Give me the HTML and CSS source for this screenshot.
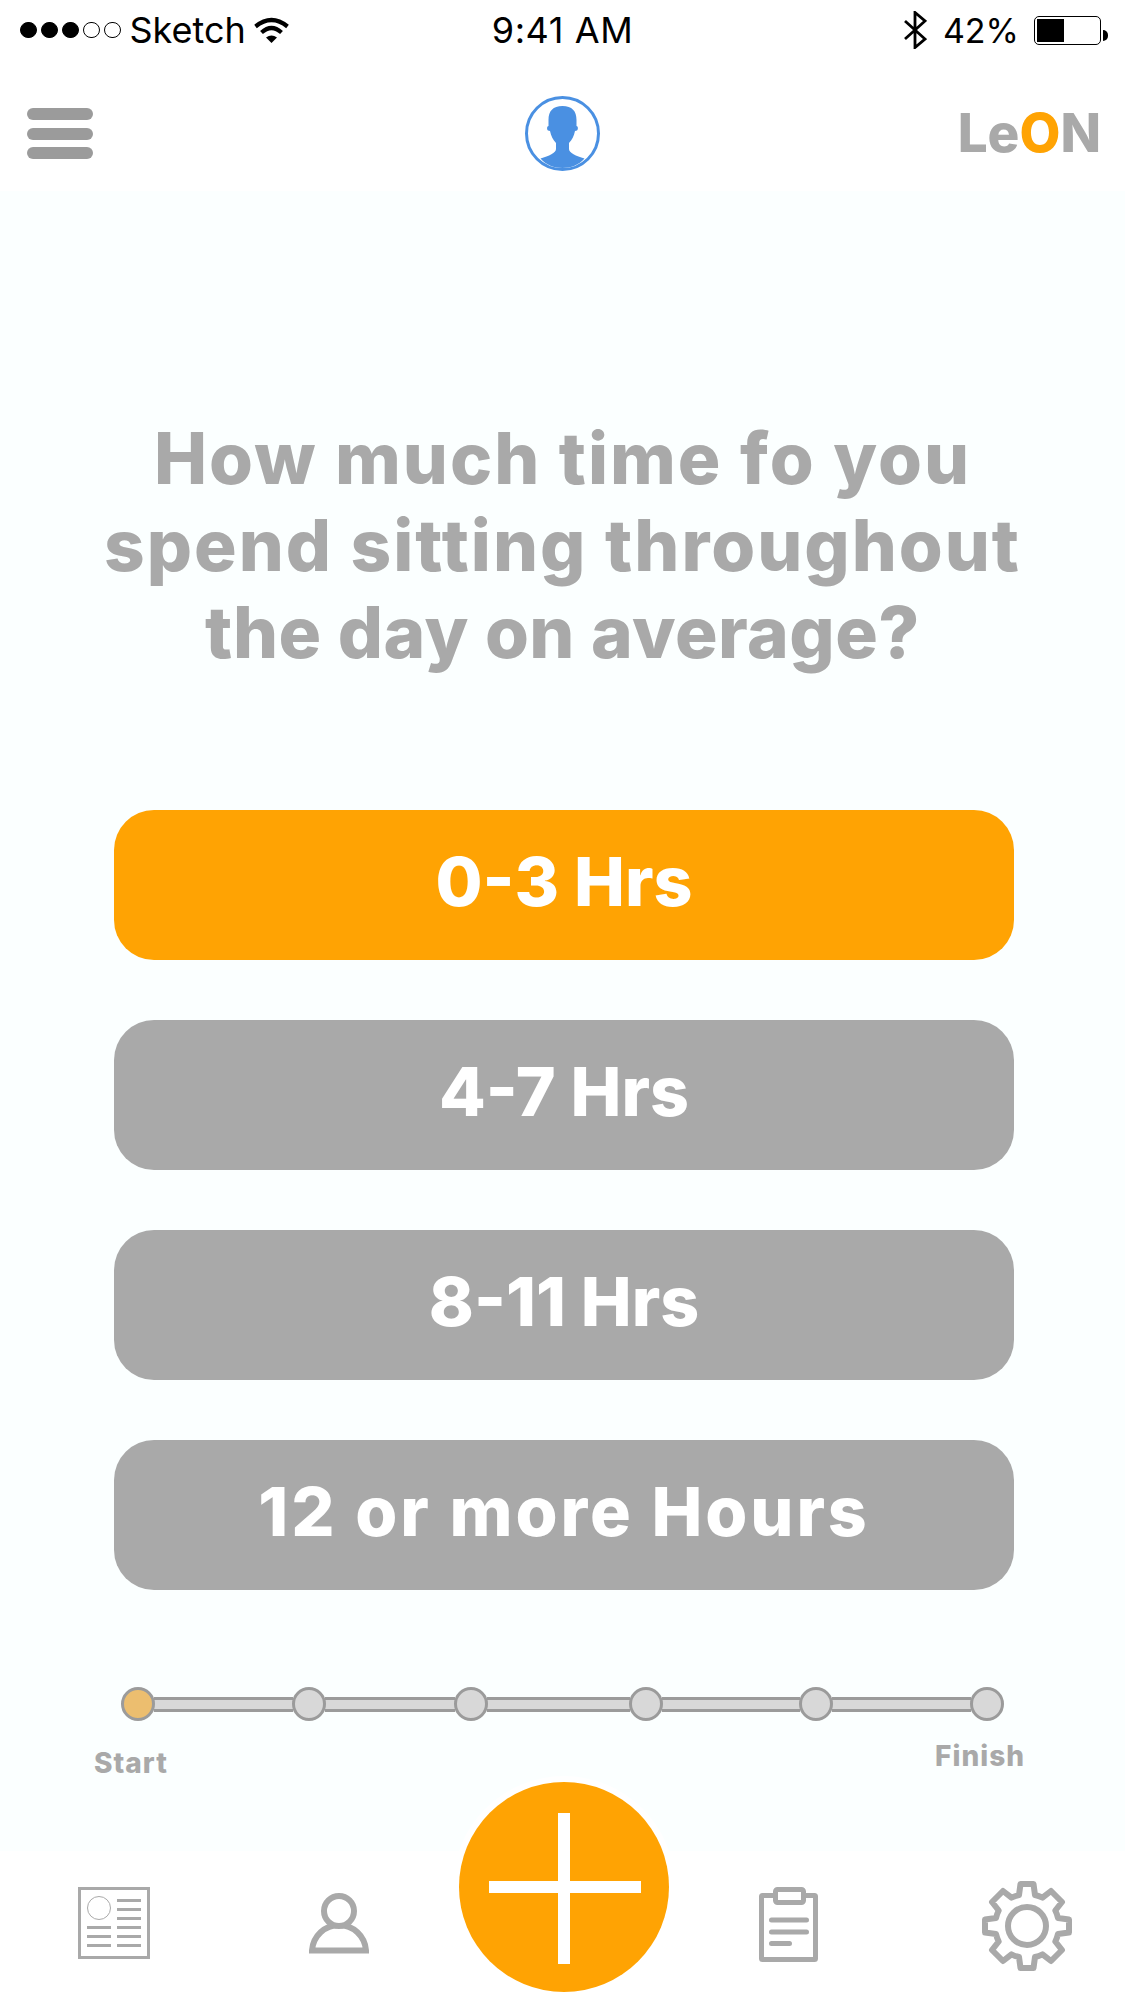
FILE: index.html
```html
<!DOCTYPE html>
<html lang="en">
<head>
  <meta charset="UTF-8" />
  <meta name="viewport" content="width=device-width, initial-scale=1.0" />
  <title>LeON - Questionnaire</title>
  <link rel="stylesheet" href="styles.css">
</head>
<body>
  <div class="status">
    <div class="status-left">
      <span class="signal">
        <i class="on"></i><i class="on"></i><i class="on"></i><i></i><i></i>
      </span>
      <span class="carrier">Sketch</span>
      <svg class="wifi" width="35" height="26" viewBox="0 0 35 26">
        <path d="M1.5 9.5Q17.5 -3.5 33.5 9.5" fill="none" stroke="#000" stroke-width="4.2" />
        <path d="M7.5 15.5Q17.5 6.5 27.5 15.5" fill="none" stroke="#000" stroke-width="4.2" />
        <path d="M12 20.5Q17.5 16.5 23 20.5L17.5 26Z" fill="#000" />
      </svg>
    </div>
    <div class="time">9:41 AM</div>
    <div class="status-right">
      <svg class="bluetooth" width="23" height="38" viewBox="0 0 23 38">
        <path d="M1 10L21 28L11 36.5V1.5L21 10L1 28" fill="none" stroke="#000" stroke-width="2.8" />
      </svg>
      <span class="percent">42%</span>
      <div class="battery"><div class="battery-level"></div></div>
      <div class="battery-nub"></div>
    </div>
  </div>

  <header class="topbar">
    <div class="menu"><span></span><span></span><span></span></div>
    <svg class="avatar" width="75" height="75" viewBox="0 0 75 75">
      <circle cx="37.5" cy="37.5" r="36" fill="#fff" stroke="#4a90e2" stroke-width="3" />
      <path d="M37.5 10C28 10 23.5 15 23.5 24V30C22 30 21.5 33 23 34.5L25 35C26 40 28 44 31 47V53C31 57 24 60 15.5 62.5C21 69 29 72 37.5 72C46 72 54 69 59.5 62.5C51 60 44 57 44 53V47C47 44 49 40 50 35L52 34.5C53.5 33 53 30 51.5 30V24C51.5 15 47 10 37.5 10Z" fill="#4a90e2" />
    </svg>
    <div class="logo">Le<span>O</span>N</div>
  </header>

  <main class="content">
    <h1 class="question">How much time fo you<br>spend sitting throughout<br><span class="tight">the day on average?</span></h1>

    <div class="answers">
      <button class="answer selected">0-3 Hrs</button>
      <button class="answer">4-7 Hrs</button>
      <button class="answer">8-11 Hrs</button>
      <button class="answer long">12 or more Hours</button>
    </div>

    <div class="progress">
      <span class="dot current"></span><span class="seg"></span>
      <span class="dot"></span><span class="seg"></span>
      <span class="dot"></span><span class="seg"></span>
      <span class="dot"></span><span class="seg"></span>
      <span class="dot"></span><span class="seg"></span>
      <span class="dot"></span>
    </div>
    <div class="progress-labels">
      <span class="start">Start</span>
      <span class="finish">Finish</span>
    </div>
  </main>

  <nav class="tabbar">
    <svg class="tab-news" width="72" height="90" viewBox="0 0 72 90">
      <rect x="1.5" y="7.5" width="69" height="69" fill="none" stroke="#a9a9a9" stroke-width="3" />
      <circle cx="21" cy="27" r="11.5" fill="none" stroke="#a9a9a9" stroke-width="1" />
      <path d="M39 19.5H63M39 28.5H63M39 37.5H63M9 46.5H33M39 46.5H63M9 55.5H33M39 55.5H63M9 64.5H33M39 64.5H63" stroke="#a9a9a9" stroke-width="3" />
    </svg>
    <svg class="tab-person" width="60" height="90" viewBox="0 0 60 90">
      <path d="M3 69.5H57C56 55 44 44 30 44S4 55 3 69.5Z" fill="none" stroke="#a9a9a9" stroke-width="6" />
      <circle cx="30" cy="30" r="15" fill="#fff" stroke="#a9a9a9" stroke-width="6" />
    </svg>
    <svg class="tab-clipboard" width="60" height="90" viewBox="0 0 60 90">
      <rect x="2.5" y="14.5" width="54" height="64" rx="1" fill="none" stroke="#a9a9a9" stroke-width="5" />
      <rect x="16.5" y="8.5" width="28" height="13" rx="2" fill="#fff" stroke="#a9a9a9" stroke-width="5" />
      <path d="M12.5 39H47.5M12.5 51H47.5M12.5 62.5H30.5" fill="none" stroke="#a9a9a9" stroke-width="5" stroke-linecap="round" />
    </svg>
    <svg class="tab-gear" width="90" height="90" viewBox="0 0 90 90">
      <path d="M37 14L38.5 3H51.5L53 14A32 32 0 0 1 60.5 16.7L69 10L80 21L73.3 29.5A32 32 0 0 1 76 37L87 38.5V51.5L76 53A32 32 0 0 1 73.3 60.5L80 69L69 80L60.5 73.3A32 32 0 0 1 53 76L51.5 87H38.5L37 76A32 32 0 0 1 29.5 73.3L21 80L10 69L16.7 60.5A32 32 0 0 1 14 53L3 51.5V38.5L14 37A32 32 0 0 1 16.7 29.5L10 21L21 10L29.5 16.7A32 32 0 0 1 37 14Z" fill="none" stroke="#a9a9a9" stroke-width="6" stroke-linejoin="round" />
      <circle cx="45" cy="45" r="19" fill="none" stroke="#a9a9a9" stroke-width="6" />
    </svg>
    <div class="fab"><span class="fab-h"></span><span class="fab-v"></span></div>
  </nav>
</body>
</html>
```

FILE: styles.css
```css
* {
  box-sizing: border-box;
}
html, body {
  margin: 0;
  padding: 0;
}
body {
  width: 1125px;
  height: 2001px;
  background: #fff;
  position: relative;
  overflow: hidden;
  font-family: 'Inter', sans-serif;
}

/* status bar */
.status {
  height: 60px;
  padding: 0 24px 0 20px;
  display: grid;
  grid-template-columns: 1fr auto 1fr;
  align-items: center;
  font-size: 36px;
  color: #000;
}
.status-left, .status-right {
  display: flex;
  align-items: center;
}
.status-right {
  justify-content: flex-end;
  position: relative;
}
.signal {
  display: flex;
  gap: 4.5px;
}
.signal i {
  display: block;
  width: 16.5px;
  height: 16.5px;
  border-radius: 50%;
  border: 1px solid #000;
}
.signal i.on {
  background: #000;
}
.carrier {
  margin-left: 9px;
}
.wifi {
  margin-left: 8px;
}
.time {
  letter-spacing: 0.6px;
  margin-left: 4px;
}
.percent {
  margin-left: 16px;
  margin-right: 15px;
  font-size: 34px;
}
.battery {
  width: 67px;
  height: 29px;
  padding: 2px;
  border: 1.5px solid #000;
  border-radius: 5px;
}
.battery-level {
  width: 27px;
  height: 100%;
  background: #000;
}
.battery-nub {
  position: absolute;
  right: -7px;
  top: 20px;
  width: 5px;
  height: 11px;
  background: #000;
  border-radius: 0 5px 5px 0;
}

/* top bar */
.topbar {
  height: 131px;
  padding: 36px 24px 0 24px;
  display: grid;
  grid-template-columns: 1fr auto 1fr;
  align-items: start;
}
.menu {
  width: 66px;
  margin: 12px 0 0 3px;
  display: flex;
  flex-direction: column;
  gap: 7.5px;
}
.menu span {
  display: block;
  height: 12px;
  background: #9b9b9b;
  border-radius: 6px;
}
.logo {
  margin-top: 7px;
  text-align: right;
  font-size: 53px;
  line-height: 60px;
  font-weight: 800;
  color: #a9a9a9;
}
.logo span {
  color: #ffa303;
}

/* main area */
.content {
  height: 1660px;
  background: #fbffff;
  padding-top: 224px;
}
.question {
  margin: 0;
  text-align: center;
  font-size: 71px;
  line-height: 87px;
  letter-spacing: 2px;
  font-weight: 800;
  color: #a9a9a9;
}
.question .tight {
  letter-spacing: 0.5px;
}
.answers {
  margin: 134px 111px 0 114px;
  display: flex;
  flex-direction: column;
  gap: 60px;
}
.answer {
  display: block;
  height: 150px;
  padding: 0 0 8px;
  border: 0;
  border-radius: 40px;
  background: #a9a9a9;
  color: #fff;
  font-family: 'Inter', sans-serif;
  font-size: 68px;
  font-weight: 800;
  text-align: center;
}
.answer.long {
  letter-spacing: 2.9px;
}
.answer.selected {
  background: #ffa303;
}
.progress {
  margin: 98px 0 0 122px;
  display: grid;
  grid-template-columns: 32px 139px 32px 130px 32px 143px 32px 138px 32px 139px 32px;
  width: 881px;
  align-items: center;
}
.dot {
  width: 34px;
  height: 34px;
  margin: -1px;
  border-radius: 50%;
  background: #d8d8d8;
  border: 3px solid #9b9b9b;
  position: relative;
  z-index: 1;
}
.dot.current {
  background: #ecbe6f;
}
.seg {
  height: 15px;
  background: #d8d8d8;
  border-top: 3px solid #9b9b9b;
  border-bottom: 3px solid #9b9b9b;
}
.progress-labels {
  display: flex;
  justify-content: space-between;
  padding: 0 100px 0 94px;
  font-size: 28px;
  font-weight: 800;
  letter-spacing: 1px;
  color: #a9a9a9;
  line-height: 34px;
}
.start {
  margin-top: 26px;
}
.finish {
  margin-top: 19px;
}

/* bottom tabs */
.tabbar {
  height: 150px;
  padding: 30px 0 0 78px;
  display: flex;
  align-items: flex-start;
}
.tab-person {
  margin-left: 159px;
}
.tab-clipboard {
  margin-left: 390px;
}
.tab-gear {
  margin-left: 163px;
}
.fab {
  position: absolute;
  left: 459px;
  top: 1782px;
  width: 210px;
  height: 210px;
  border-radius: 50%;
  background: #ffa303;
  box-shadow: 0 0 0 6px #fff;
}
.fab-h {
  position: absolute;
  left: 30px;
  top: 99px;
  width: 152px;
  height: 12px;
  background: #fff;
}
.fab-v {
  position: absolute;
  left: 99px;
  top: 31px;
  width: 12px;
  height: 151px;
  background: #fff;
}
```
